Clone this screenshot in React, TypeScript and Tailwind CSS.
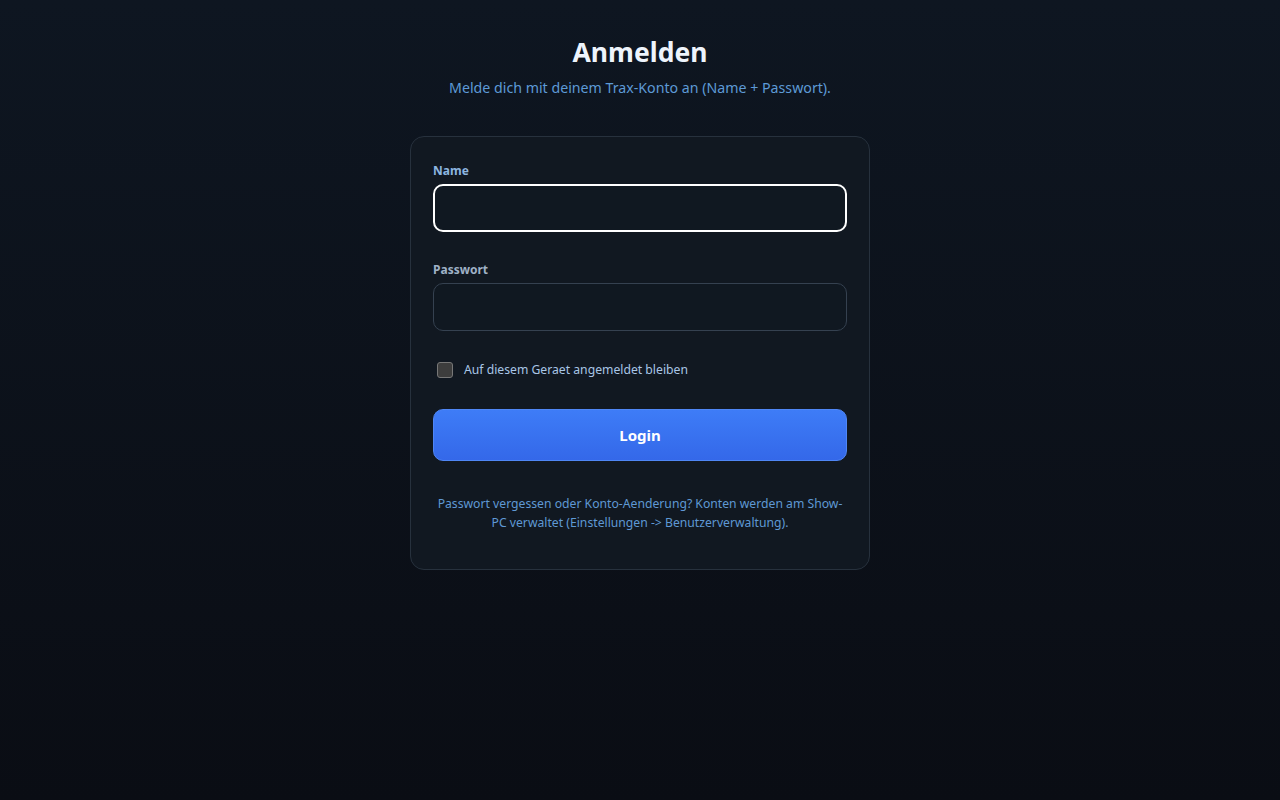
import { useState } from "react";

export default function App() {
  const [name, setName] = useState("");
  const [password, setPassword] = useState("");
  const [remember, setRemember] = useState(false);

  return (
    <div
      className="min-h-screen w-full bg-gradient-to-b from-[#0e1621] to-[#0a0d14] text-[#e6edf6]"
      style={{ fontFamily: '"Noto Sans", "Open Sans", sans-serif' }}
    >
      <div className="flex flex-col items-center pt-[33px]">
        <h1 className="text-[26.5px] font-bold leading-[38px] text-[#eef4fc]">Anmelden</h1>
        <p className="mt-[7px] text-[14.2px] leading-[20px] text-[#5d9ad6]">
          Melde dich mit deinem Trax-Konto an (Name + Passwort).
        </p>

        <div className="mt-[38px] w-[460px] rounded-[14px] border border-[#27313d] bg-[#111821] px-[22px] pt-[25px] pb-[37px]">
          {/* Name */}
          <label className="block text-[12px] font-bold leading-[18px] text-[#8db6e0]">Name</label>
          <input
            autoFocus
            value={name}
            onChange={(e) => setName(e.target.value)}
            className="mt-[4px] block h-[48px] w-full rounded-[10px] border-2 border-white bg-[#101821] px-3 text-[14px] text-white outline-none"
          />

          {/* Passwort */}
          <label className="mt-[29px] block text-[12px] font-bold leading-[18px] text-[#9fb1c6]">Passwort</label>
          <input
            type="password"
            value={password}
            onChange={(e) => setPassword(e.target.value)}
            className="mt-[4px] block h-[48px] w-full rounded-[10px] border border-[#354150] bg-[#101821] px-3 text-[14px] text-white outline-none"
          />

          <label className="mt-[30px] flex items-center gap-[11px] pl-[4px]">
            <input
              type="checkbox"
              checked={remember}
              onChange={(e) => setRemember(e.target.checked)}
              className="h-[16px] w-[16px] appearance-none rounded-[3px] border border-[#777] bg-[#3d3d3d]"
            />
            <span className="text-[12.2px] leading-[18px] text-[#a9c6e6]">Auf diesem Geraet angemeldet bleiben</span>
          </label>

          <button className="mt-[30px] flex h-[52px] w-full items-center justify-center rounded-[10px] border border-[#4f86f5] bg-gradient-to-b from-[#3e7cf7] to-[#3468e9] text-[15px] font-bold text-white">
            Login
          </button>

          <p className="mt-[33px] text-center text-[12.2px] leading-[19px] text-[#5f98d4]">
            Passwort vergessen oder Konto-Aenderung? Konten werden am Show-PC verwaltet (Einstellungen -&gt; Benutzerverwaltung).
          </p>
        </div>
      </div>
    </div>
  );
}
